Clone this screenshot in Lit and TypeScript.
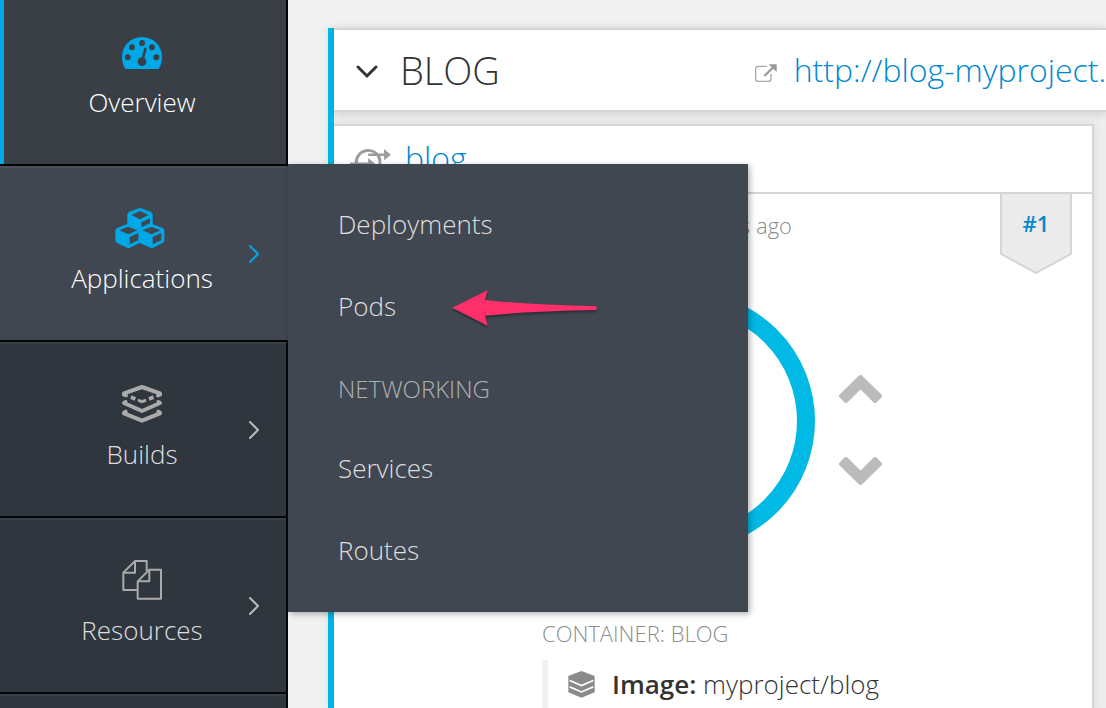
import { LitElement, html, css, svg } from "lit";
import { customElement, property } from "lit/decorators.js";

const overviewIcon = html`<svg class="glyph" width="50" height="40" viewBox="351 96 150 120" aria-hidden="true">
  <path fill="currentColor" d="M376 207C369 197 366 184 366 171A60 60 0 0 1 486 171C486 184 483 197 476 207Z" />
  <g fill="#393f45">
    <circle cx="383" cy="172" r="9" /><circle cx="396" cy="142" r="9" /><circle cx="426" cy="129" r="9" />
    <circle cx="456" cy="142" r="9" /><circle cx="469" cy="172" r="9" /><circle cx="426" cy="185" r="13" />
  </g>
  <path d="M428 178L436 147" stroke="#393f45" stroke-width="8" stroke-linecap="round" />
</svg>`;

const cubesIcon = html`<svg class="glyph" width="50" height="40" viewBox="353 143 150 120" overflow="visible" aria-hidden="true">
  <g fill="currentColor" fill-rule="evenodd">
    <path d="M418 144Q422 142 426 144L456 156Q460 158 460 163V190L422 208L384 190V163Q384 158 388 156ZM422 152L396 164L422 177L448 164ZM426 186V201L452 189V174Z" />
    <path d="M386 190L422 206V247L391 262Q387 264 383 262L352 247Q348 245 348 240V211Q348 206 352 204ZM386 199L360 210L387 222L414 210ZM391 230V252L417 240V218Z" />
    <path d="M457 190L491 204Q495 206 495 211V240Q495 245 491 247L461 262Q457 264 453 262L420 247V206ZM457 199L429 210L457 222L484 210ZM460 230V252L486 240V218Z" />
  </g>
</svg>`;

const buildsIcon = html`<svg class="glyph" width="50" height="40" viewBox="351 147 150 120" aria-hidden="true">
  <g fill="none" stroke="currentColor" stroke-width="12" stroke-linecap="round" stroke-linejoin="round">
    <path d="M378 181L372 179V175L426 156L480 175V179L474 181" />
    <path d="M377 201L372 204L426 228L480 204L475 201" />
    <path d="M377 230L372 233V235L426 257L480 235V233L475 230" />
  </g>
  <path fill="currentColor" d="M394 181L408 187L404 197L391 192ZM459 181L445 187L449 197L462 192ZM414 191L426 195L438 191L439 200L426 205L413 200Z" />
</svg>`;

const resourcesIcon = html`<svg class="glyph" width="50" height="40" viewBox="351 150 150 120" aria-hidden="true">
  <g fill="none" stroke="currentColor" stroke-width="6" stroke-linejoin="round">
    <path d="M412 240H370V188L405 153H440V184" /><path d="M370 188H405V153" />
    <path d="M413 214L448 179H483V266H413Z" /><path d="M413 214H448V179" />
  </g>
</svg>`;

const angleRight = html`<svg width="12" height="18" viewBox="0 0 12 18" aria-hidden="true">
  <path d="M2 1L10 9L2 17" fill="none" stroke="currentColor" stroke-width="2" stroke-linecap="round" stroke-linejoin="round" />
</svg>`;

@customElement("side-nav")
class SideNav extends LitElement {
  static styles = css`
    :host { display: block; flex: 0 0 288px; position: relative; z-index: 2; }
    .nav { height: 100%; display: flex; flex-direction: column; background: #30363d; }
    .item { position: relative; border-bottom: 2px solid #050505; }
    .item > .link {
      display: grid; grid-template-columns: 1fr auto 1fr; align-items: center;
      width: 100%; box-sizing: border-box; padding: 42px 2px 44px 0; margin: 0;
      border: 0; border-right: 2px solid #050505; background: #30363d;
      box-shadow: inset 0 2px #393f47; color: #dedede;
      font: 300 26px/36px "Open Sans", sans-serif; text-decoration: none; cursor: pointer;
    }
    .stack { grid-column: 2; display: flex; flex-direction: column; align-items: center; gap: 12px; }
    .glyph { display: block; color: #aaa; }
    .more { justify-self: end; padding: 4px 24px 0 0; display: flex; color: #bbb; }
    .item > .current { padding-top: 32px; background: #393f45; box-shadow: inset 4px 0 #00a8e8; color: #fff; }
    .item > .open { background: #414750; border-right-color: #414750; box-shadow: inset 0 2px #4a505b; color: #fff; }
    .current .glyph, .open .glyph, .open .more { color: #00a8e8; }
    .rest { flex: 1; border-right: 2px solid #050505; box-shadow: inset 0 2px #393f47; }
    .flyout {
      position: absolute; left: 100%; top: -2px; width: 460px; box-sizing: border-box; padding: 19px 0 21px;
      background: #414750; box-shadow: 2px 2px 6px rgba(0, 0, 0, 0.3);
    }
    .entry, .heading { display: flex; align-items: center; box-sizing: border-box; padding: 0 50px; }
    .entry { height: 82px; color: #dedede; font: 300 26px/36px "Open Sans", sans-serif; text-decoration: none; }
    .heading { height: 80px; margin: 0; padding-top: 4px; color: #aeb2b6; font: 300 24px/36px "Open Sans", sans-serif; }
    .pointer { margin: 4px 0 0 56px; filter: drop-shadow(0 2px 1px rgba(0, 0, 0, 0.35)); }
  `;

  render() {
    return html`<nav class="nav" aria-label="Main">
      <div class="item"><a class="link current" href="#overview">
        <span class="stack">${overviewIcon}<span>Overview</span></span></a></div>
      <div class="item">
        <button class="link open" aria-expanded="true">
          <span class="stack">${cubesIcon}<span>Applications</span></span><span class="more">${angleRight}</span>
        </button>
        <div class="flyout">
          <a class="entry" href="#deployments">Deployments</a>
          <a class="entry" href="#pods">Pods
            <svg class="pointer" width="146" height="36" viewBox="66 59 438 108" aria-hidden="true">
              <path fill="#ff2f6c" d="M67 112L173 60L165 89Q300 104 498 108Q502 114 498 119Q300 122 165 136L173 166Z" />
            </svg></a>
          <h2 class="heading">NETWORKING</h2>
          <a class="entry" href="#services">Services</a>
          <a class="entry" href="#routes">Routes</a>
        </div>
      </div>
      <div class="item"><button class="link">
        <span class="stack">${buildsIcon}<span>Builds</span></span><span class="more">${angleRight}</span></button></div>
      <div class="item"><button class="link">
        <span class="stack">${resourcesIcon}<span>Resources</span></span><span class="more">${angleRight}</span></button></div>
      <div class="rest"></div>
    </nav>`;
  }
}

@customElement("deployment-card")
class DeploymentCard extends LitElement {
  @property() name = "";
  @property() age = "";
  @property() image = "";
  @property({ type: Number }) revision = 1;

  static styles = css`
    :host {
      display: flex; flex-direction: column; flex: 1; margin: 12px 12px 0 0; background: #fff;
      border: 2px solid #d5d5d5; border-width: 2px 2px 0 0; box-shadow: 0 0 8px rgba(0, 0, 0, 0.08);
    }
    a { color: #0088ce; text-decoration: none; }
    .top { display: flex; align-items: center; gap: 14px; padding: 10px 16px 12px; border-bottom: 2px solid #d5d5d5; }
    .top svg { margin-top: 6px; }
    .name { font: 300 32px/44px "Open Sans", sans-serif; }
    .meta { display: flex; justify-content: flex-end; gap: 208px; padding-right: 20px; }
    .age { padding-top: 13px; color: #8c8c8c; font: 300 22px/36px "Open Sans", sans-serif; }
    .revision { position: relative; width: 72px; height: 79px; text-align: center; font: 600 22px/58px "Open Sans", sans-serif; }
    .ribbon { position: absolute; left: 0; top: 0; }
    .number { position: relative; }
    .details { padding-left: 208px; }
    .scale { display: flex; align-items: center; gap: 24px; padding: 19px 0 0 15px; }
    .steps { display: flex; flex-direction: column; gap: 54px; padding-top: 18px; }
    .step { display: block; padding: 0; border: 0; background: none; cursor: pointer; color: #bbb; }
    .step svg, .ring { display: block; }
    .container { margin: 68px 0 12px; color: #8c8c8c; font: 300 22px/30px "Open Sans", sans-serif; }
    .facts { display: flex; align-items: center; gap: 17px; padding: 6px 0 12px 20px; border-left: 6px solid #f1f1f1; color: #333; font: 300 26px/36px "Open Sans", sans-serif; }
    .facts strong { font-weight: 600; }
  `;

  private step(label: string, d: string) {
    return html`<button class="step" aria-label=${label}>
      <svg width="43" height="28" viewBox="0 0 43 28">
        ${svg`<path d=${d} fill="currentColor" stroke="currentColor" stroke-width="4" stroke-linejoin="round" />`}
      </svg></button>`;
  }

  render() {
    return html`
      <div class="top">
        <svg width="41" height="30" viewBox="90 438 124 90" aria-hidden="true">
          <g fill="none" stroke="#9c9c9c">
            <path stroke-width="9" d="M109 490A36 36 0 1 1 181 484M181 480A36 36 0 0 1 113 500" />
            <path stroke-width="7" d="M145 464H195M90 491H148" />
          </g>
          <path fill="#9c9c9c" d="M193 447L214 464L193 481ZM145 474L166 491L145 508Z" />
        </svg>
        <a class="name" href="#deployment">${this.name}</a>
      </div>
      <div class="meta">
        <span class="age">${this.age}</span>
        <a class="revision" href="#revision">
          <svg class="ribbon" width="72" height="80" viewBox="0 0 72 80" aria-hidden="true">
            <path fill="#ebebeb" stroke="#d5d5d5" stroke-width="2" d="M1 -2H71V60L36 79L1 60Z" />
          </svg>
          <span class="number">#${this.revision}</span>
        </a>
      </div>
      <div class="details">
        <div class="scale">
          <svg class="ring" width="258" height="258" viewBox="0 0 258 258" aria-hidden="true">
            <circle cx="129" cy="129" r="120" fill="none" stroke="#00b9e4" stroke-width="18" />
          </svg>
          <div class="steps">
            ${this.step("Scale up", "M21.5 2L41 21L36 26L21.5 11.500L7 26L2 21Z")}
            ${this.step("Scale down", "M21.5 26L41 7L36 2L21.5 16.500L7 2L2 7Z")}
          </div>
        </div>
        <div class="container">CONTAINER: BLOG</div>
        <div class="facts">
          <svg width="27" height="27" viewBox="747 269 80 80" aria-hidden="true">
            <path fill="#8a8a8a" d="M787 269L826 284V332L787 348L748 332V284Z" />
            <path fill="none" stroke="#fff" stroke-width="5" d="M752 297L787 312L822 297M752 316L787 331L822 316" />
          </svg>
          <span><strong>Image:</strong> ${this.image}</span>
        </div>
      </div>`;
  }
}

@customElement("app-root")
class AppRoot extends LitElement {
  static styles = css`
    :host { display: flex; height: 100vh; overflow: hidden; background: #f1f1f1; }
    .main { flex: 1; min-width: 0; display: flex; padding: 28px 0 0 40px; }
    .service {
      flex: 1; min-width: 0; display: flex; flex-direction: column; background: #ededed;
      border-left: 6px solid #00b9e4; box-shadow: 0 0 8px rgba(0, 0, 0, 0.08);
    }
    .header {
      flex: none; display: flex; align-items: center; padding: 14px 0 14px 22px; background: #fff;
      border: 2px solid #d5d5d5; border-width: 2px 0; box-shadow: 0 2px 8px rgba(0, 0, 0, 0.12);
    }
    .toggle { display: flex; padding: 4px 0 0; border: 0; background: none; cursor: pointer; }
    .title { flex: 1; margin: 0 0 0 22px; color: #333; font: 300 38px/52px "Open Sans", sans-serif; }
    .route { flex: 0 0 351px; display: flex; align-items: center; gap: 17px; }
    .route svg { flex: none; margin-top: 6px; }
    .url { color: #0088ce; font: 300 32px/44px "Open Sans", sans-serif; white-space: nowrap; text-decoration: none; }
  `;

  render() {
    return html`
      <side-nav></side-nav>
      <main class="main">
        <section class="service">
          <header class="header">
            <button class="toggle" aria-label="Collapse service">
              <svg width="22" height="14" viewBox="0 0 22 14">
                <path d="M2 2L11 11L20 2" fill="none" stroke="#333" stroke-width="3" stroke-linecap="round" />
              </svg>
            </button>
            <h1 class="title">BLOG</h1>
            <div class="route">
              <svg width="22" height="19" viewBox="166 192 66 57" aria-hidden="true">
                <path fill="none" stroke="#aaa" stroke-width="4" d="M202 199H176Q168 199 168 207V236Q168 244 176 244H206Q214 244 214 236V222" />
                <path stroke="#999" stroke-width="7" d="M194 228L222 201" />
                <path fill="#999" d="M207 193H231V216Z" />
              </svg>
              <a class="url" href="#route">http://blog-myproject.</a>
            </div>
          </header>
          <deployment-card name="blog" age="minutes ago" image="myproject/blog" revision="1"></deployment-card>
        </section>
      </main>`;
  }
}
